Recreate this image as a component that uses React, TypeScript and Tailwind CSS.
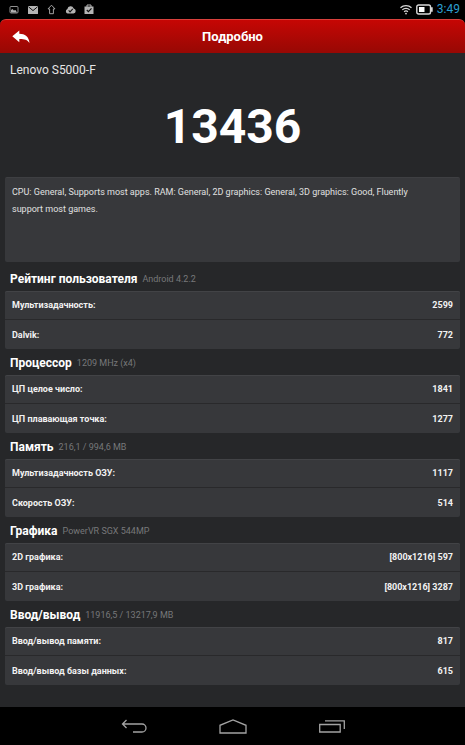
import React from "react";

type Row = { label: string; value: string };
type Section = { title: string; note: string; rows: Row[] };

const sections: Section[] = [
  {
    title: "Рейтинг пользователя",
    note: "Android 4.2.2",
    rows: [
      { label: "Мультизадачность:", value: "2599" },
      { label: "Dalvik:", value: "772" },
    ],
  },
  {
    title: "Процессор",
    note: "1209 MHz (x4)",
    rows: [
      { label: "ЦП целое число:", value: "1841" },
      { label: "ЦП плавающая точка:", value: "1277" },
    ],
  },
  {
    title: "Память",
    note: "216,1 / 994,6 MB",
    rows: [
      { label: "Мультизадачность ОЗУ:", value: "1117" },
      { label: "Скорость ОЗУ:", value: "514" },
    ],
  },
  {
    title: "Графика",
    note: "PowerVR SGX 544MP",
    rows: [
      { label: "2D графика:", value: "[800x1216] 597" },
      { label: "3D графика:", value: "[800x1216] 3287" },
    ],
  },
  {
    title: "Ввод/вывод",
    note: "11916,5 / 13217,9 MB",
    rows: [
      { label: "Ввод/вывод памяти:", value: "817" },
      { label: "Ввод/вывод базы данных:", value: "615" },
    ],
  },
];

function StatusBar() {
  return (
    <div className="flex h-[19px] items-center justify-between bg-black pr-[5px] pl-2 text-[#b4b4b4]">
      <div className="flex items-center gap-2">
        <svg width="11" height="11" viewBox="0 0 11 11" fill="none" aria-hidden="true">
          <rect x="2" y="2.5" width="8" height="6.5" rx="1" stroke="currentColor" opacity="0.8" />
          <path d="M3 8.5V6l1.500-1 1.300 1.500L7.500 6l1.500 2.500z" fill="currentColor" />
        </svg>
        <svg width="11" height="11" viewBox="0 0 11 11" aria-hidden="true">
          <rect x="1" y="2" width="10" height="8" rx="0.5" fill="currentColor" />
          <path d="M1.500 2.800 6 6.600l4.500-3.800" fill="none" stroke="#111" />
        </svg>
        <svg width="11" height="11" viewBox="0 0 11 11" fill="none" aria-hidden="true">
          <path d="M5.500 1.200 9 4.900H7.400V9.700H3.600V4.900H2z" stroke="currentColor" strokeWidth="0.900" />
        </svg>
        <svg width="11" height="11" viewBox="0 0 12 11" aria-hidden="true">
          <path d="M3 9.800A2.500 2.500 0 0 1 2.600 5 3.600 3.600 0 0 1 9.500 4.300 2.800 2.800 0 0 1 9.300 9.800z" fill="currentColor" />
          <path d="m4 6.500 1.500 1.600 3-3.300" fill="none" stroke="#111" strokeWidth="1.200" />
        </svg>
        <svg width="11" height="11" viewBox="0 0 11 11" aria-hidden="true">
          <path d="M.5 2.500h9V10h-9z" fill="currentColor" />
          <path d="M3 3V1h4v2" fill="none" stroke="currentColor" />
          <path d="m2.800 6 1.600 1.600L7.500 4.300" fill="none" stroke="#111" strokeWidth="1.200" />
        </svg>
      </div>
      <div className="flex items-center gap-1">
        <svg width="12" height="11" viewBox="0 0 12 11" fill="none" stroke="#d8d8d8" strokeWidth="1.200" aria-hidden="true">
          <path d="M.5 3.800a7.800 7.800 0 0 1 11 0M2.300 5.900a5.200 5.200 0 0 1 7.400 0M4.100 7.800a2.700 2.700 0 0 1 3.800 0" />
          <circle cx="6" cy="9.600" r="0.900" fill="#d8d8d8" stroke="none" />
        </svg>
        <svg width="17" height="11" viewBox="0 0 17 11" aria-hidden="true">
          <rect x="0.800" y="1" width="13.700" height="9" rx="1.800" fill="none" stroke="#d8d8d8" strokeWidth="1.400" />
          <path d="M15 3.300h1.700v4.400H15z" fill="#d8d8d8" />
          <path d="M3 3h5.500v5H3z" fill="#fff" />
        </svg>
        <time className="text-xs leading-[19px] text-[#2b9fd0]">3:49</time>
      </div>
    </div>
  );
}

function Header() {
  return (
    <header className="bg-black">
      <div className="grid h-[34px] grid-cols-[1fr_auto_1fr] items-center rounded-t-md border-t border-[#d8403c] bg-linear-to-b from-[#c60604] to-[#970804] px-3">
        <button type="button" aria-label="Назад" className="justify-self-start">
          <svg width="18" height="14" viewBox="0 0 18 14" className="block" aria-hidden="true">
            <path d="M.3 6.300 7.300.5v3.300C13 3.800 17 6.800 17.500 13 15.300 9.600 12 8.900 7.300 9v3.200z" fill="#fff" />
          </svg>
        </button>
        <h1 className="text-[13px] leading-5 font-bold text-white">Подробно</h1>
      </div>
    </header>
  );
}

function ScoreSection({ title, note, rows }: Section) {
  return (
    <section>
      <div className="flex h-[26px] items-center gap-[5px] px-[5px] pt-0.5">
        <h2 className="text-xs leading-4 font-bold text-white">{title}</h2>
        <span className="text-[9px] leading-4 text-[#77787a]">{note}</span>
      </div>
      <dl className="divide-y divide-[#29292b] rounded-xs bg-[#37383b] text-[9px] font-bold text-[#f2f2f2] shadow-[inset_0_1px_0_#424346]">
        {rows.map((row) => (
          <div key={row.label} className="flex h-[29px] items-center justify-between px-[7px] pt-0.5">
            <dt>{row.label}</dt>
            <dd>{row.value}</dd>
          </div>
        ))}
      </dl>
    </section>
  );
}

function NavBar() {
  return (
    <nav className="flex h-[38px] items-center justify-center gap-[72px] bg-black pt-0.5">
      <button type="button" aria-label="Назад">
        <svg width="26" height="16" viewBox="0 0 26 16" fill="none" stroke="#a3a3a3" strokeWidth="1.300" className="block" aria-hidden="true">
          <path d="M5.500 1 1.500 5l4 4M1.500 5h19.500a4 4 0 0 1 0 8H12" />
        </svg>
      </button>
      <button type="button" aria-label="Домой">
        <svg width="28" height="16" viewBox="0 0 28 16" fill="none" stroke="#a3a3a3" strokeWidth="1.300" className="block" aria-hidden="true">
          <path d="M1 14V6.300L14 1l13 5.300V14z" />
        </svg>
      </button>
      <button type="button" aria-label="Недавние приложения">
        <svg width="26" height="16" viewBox="0 0 26 16" fill="none" stroke="#a3a3a3" strokeWidth="1.300" className="block" aria-hidden="true">
          <path d="M.7 5.500h20.500V13H.7zM6 1.800h19.300V10" />
        </svg>
      </button>
    </nav>
  );
}

export default function App() {
  return (
    <div className="flex min-h-screen flex-col bg-[#262729] font-[Roboto,sans-serif]">
      <StatusBar />
      <Header />
      <main className="flex-1 px-[5px]">
        <p className="px-[5px] pt-2 text-xs leading-[18px] text-[#e6e6e6]">Lenovo S5000-F</p>
        <p className="pt-5 text-center text-5xl leading-[56px] font-bold text-white">13436</p>
        <p className="mt-[22px] mb-[3px] min-h-[85px] rounded-xs border-t border-[#3e3f42] bg-[#37383b] pt-1.5 pr-7 pl-[7px] text-[9px] leading-[17px] text-[#e0e0e0]">
          CPU: General, Supports most apps. RAM: General, 2D graphics: General, 3D graphics: Good, Fluently support most games.
        </p>
        {sections.map((section) => (
          <ScoreSection key={section.title} {...section} />
        ))}
      </main>
      <NavBar />
    </div>
  );
}
